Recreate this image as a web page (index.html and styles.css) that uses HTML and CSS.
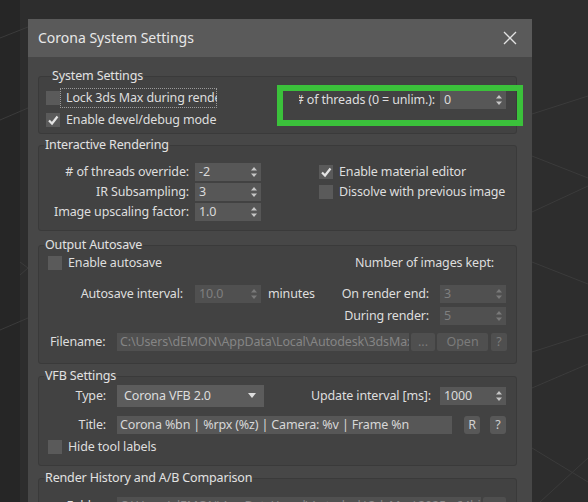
FILE: index.html
```html
<!DOCTYPE html>
<html lang="en">
<head>
    <meta charset="utf-8">
    <title>Corona System Settings</title>
    <link rel="stylesheet" href="styles.css">
</head>
<body>
<div class="viewport">
    <!-- viewport grid behind the dialog -->
    <svg class="grid" width="588" height="502" viewBox="0 0 588 502">
        <g stroke="#3b3b3b" stroke-width="1" fill="none">
            <path d="M0 38 L28 27"/>
            <path d="M0 120 L28 108"/>
            <path d="M20 262 L28 268 L20 275"/>
            <path d="M0 330 L28 318"/>
            <path d="M532 114 L588 96"/>
            <path d="M532 156 L588 178"/>
            <path d="M532 212 L588 186"/>
            <path d="M532 262 L588 284"/>
            <path d="M532 352 L588 334"/>
            <path d="M532 388 L588 364"/>
            <path d="M532 448 L588 482"/>
            <path d="M540 502 L588 458"/>
        </g>
    </svg>

    <div class="dialog">
        <div class="titlebar">
            <span class="title">Corona System Settings</span>
            <svg class="close" width="14" height="14" viewBox="0 0 14 14">
                <path d="M1 1 L13 13 M13 1 L1 13" stroke="#e2e2e2" stroke-width="1.3"/>
            </svg>
        </div>

        <div class="dialog-body">
            <fieldset class="group sys">
                <legend>System Settings</legend>
                <label class="check">
                    <span class="box"></span>
                    <span class="text focus">Lock 3ds Max during render</span>
                </label>
                <div class="sys-threads">
                    <span class="clip"><span># of threads (0 = unlim.):</span></span>
                    <div class="spin">0<svg width="6" height="12" viewBox="0 0 6 12"><path d="M0 4.5 L3 1 L6 4.5Z M0 7.5 L3 11 L6 7.5Z"/></svg></div>
                </div>
                <label class="check">
                    <span class="box"><svg width="14" height="14" viewBox="0 0 14 14"><path d="M3 7.5 L6 10.5 L11.5 3.5"/></svg></span>
                    <span class="text">Enable devel/debug mode</span>
                </label>
                <div class="highlight"></div>
            </fieldset>

            <fieldset class="group interactive">
                <legend>Interactive Rendering</legend>
                <div class="ir-grid">
                    <span class="lbl"># of threads override:</span>
                    <div class="spin">-2<svg width="6" height="12" viewBox="0 0 6 12"><path d="M0 4.5 L3 1 L6 4.5Z M0 7.5 L3 11 L6 7.5Z"/></svg></div>
                    <span class="lbl">IR Subsampling:</span>
                    <div class="spin">3<svg width="6" height="12" viewBox="0 0 6 12"><path d="M0 4.5 L3 1 L6 4.5Z M0 7.5 L3 11 L6 7.5Z"/></svg></div>
                    <span class="lbl">Image upscaling factor:</span>
                    <div class="spin">1.0<svg width="6" height="12" viewBox="0 0 6 12"><path d="M0 4.5 L3 1 L6 4.5Z M0 7.5 L3 11 L6 7.5Z"/></svg></div>
                </div>
                <div class="ir-checks">
                    <label class="check">
                        <span class="box"><svg width="14" height="14" viewBox="0 0 14 14"><path d="M3 7.5 L6 10.5 L11.5 3.5"/></svg></span>
                        <span class="text">Enable material editor</span>
                    </label>
                    <label class="check">
                        <span class="box"></span>
                        <span class="text">Dissolve with previous image</span>
                    </label>
                </div>
            </fieldset>

            <fieldset class="group autosave">
                <legend>Output Autosave</legend>
                <div class="as-top">
                    <label class="check">
                        <span class="box"></span>
                        <span class="text">Enable autosave</span>
                    </label>
                    <span>Number of images kept:</span>
                </div>
                <div class="as-grid">
                    <span class="lbl">Autosave interval:</span>
                    <div class="spin off">10.0<svg width="6" height="12" viewBox="0 0 6 12"><path d="M0 4.5 L3 1 L6 4.5Z M0 7.5 L3 11 L6 7.5Z"/></svg></div>
                    <span class="unit">minutes</span>
                    <span class="lbl">On render end:</span>
                    <div class="spin off">3<svg width="6" height="12" viewBox="0 0 6 12"><path d="M0 4.5 L3 1 L6 4.5Z M0 7.5 L3 11 L6 7.5Z"/></svg></div>

                    <span class="lbl wide">During render:</span>
                    <div class="spin off">5<svg width="6" height="12" viewBox="0 0 6 12"><path d="M0 4.5 L3 1 L6 4.5Z M0 7.5 L3 11 L6 7.5Z"/></svg></div>
                </div>
                <div class="file-row">
                    <span class="file-lbl">Filename:</span>
                    <div class="input off file-input">C:\Users\dEMON\AppData\Local\Autodesk\3dsMax</div>
                    <button class="btn off dots">...</button>
                    <button class="btn off open">Open</button>
                    <button class="btn off help">?</button>
                </div>
            </fieldset>

            <fieldset class="group vfb">
                <legend>VFB Settings</legend>
                <div class="vfb-row">
                    <span class="row-lbl">Type:</span>
                    <div class="combo">Corona VFB 2.0<svg width="8" height="6" viewBox="0 0 8 6"><path d="M0 0 L8 0 L4 5Z"/></svg></div>
                    <span class="push">Update interval [ms]:</span>
                    <div class="spin">1000<svg width="6" height="12" viewBox="0 0 6 12"><path d="M0 4.5 L3 1 L6 4.5Z M0 7.5 L3 11 L6 7.5Z"/></svg></div>
                </div>
                <div class="vfb-row title-row">
                    <span class="row-lbl">Title:</span>
                    <div class="input title-input">Corona %bn | %rpx (%z) | Camera: %v | Frame %n</div>
                    <button class="btn small r">R</button>
                    <button class="btn small q">?</button>
                </div>
                <label class="check hide-labels">
                    <span class="box"></span>
                    <span class="text">Hide tool labels</span>
                </label>
            </fieldset>

            <fieldset class="group history">
                <legend>Render History and A/B Comparison</legend>
                <div class="vfb-row">
                    <span class="row-lbl">Folder:</span>
                    <div class="input off folder-input">C:\Users\dEMON\AppData\Local\Autodesk\3dsMax\2025 - 64bi</div>
                    <button class="btn off folder-btn">...</button>
                </div>
            </fieldset>
        </div>
    </div>
</div>
</body>
</html>
```

FILE: styles.css
```css
* {
    box-sizing: border-box;
}

html, body {
    margin: 0;
    height: 100%;
    overflow: hidden;
}

body {
    background: #2c2c2c;
    font-family: "Noto Sans", "Open Sans", sans-serif;
    font-size: 12.5px;
    letter-spacing: -0.15px;
    line-height: 18px;
    color: #dedede;
}

.viewport {
    position: relative;
    width: 588px;
    height: 502px;
    background: linear-gradient(to right, #262626 0 20px, #2d2d2d 20px);
}

.grid {
    position: absolute;
    left: 0;
    top: 0;
}

/* window */
.dialog {
    position: absolute;
    left: 28px;
    top: 19px;
    width: 504px;
    height: 483px;
    background: #474747;
    overflow: hidden;
}

.titlebar {
    height: 38px;
    background: #5a5a5a;
    display: flex;
    align-items: center;
    justify-content: space-between;
    padding: 0 15px 0 10px;
}

.title {
    font-size: 14px;
    letter-spacing: 0;
    color: #e8e8e8;
}

.dialog-body {
    padding: 10px 15px 0 10px;
    display: flex;
    flex-direction: column;
    gap: 2px;
}

/* group boxes */
.group {
    margin: 0;
    padding: 0;
    min-width: 0;
    border: 1px solid #3a3a3a;
    border-radius: 3px;
    background: #424242;
    position: relative;
}

.group legend {
    margin-left: 5px;
    padding: 0 1px;
    line-height: 18px;
    color: #e2e2e2;
}

/* controls */
.check {
    display: flex;
    align-items: center;
    height: 18px;
}

.box {
    width: 14px;
    height: 14px;
    flex: none;
    background: #5a5a5a;
}

.box svg {
    display: block;
    fill: none;
    stroke: #e4e4e4;
    stroke-width: 2.2;
}

.check .text {
    padding: 0 3px 0 6px;
    white-space: nowrap;
}

.spin {
    width: 66px;
    height: 18px;
    flex: none;
    display: flex;
    align-items: center;
    justify-content: space-between;
    padding: 0 4px 0 4px;
    background: #575757;
    color: #dadada;
}

.spin svg {
    fill: #c6c6c6;
}

.spin.off {
    background: #505050;
    color: #7f7f7f;
}

.spin.off svg {
    fill: #7a7a7a;
}

.input {
    height: 18px;
    padding: 0 3px;
    background: #575757;
    color: #d8d8d8;
    white-space: nowrap;
    overflow: hidden;
}

.input.off {
    background: #505050;
    color: #858585;
}

.btn {
    height: 18px;
    padding: 0;
    border: 0;
    border-radius: 2px;
    font: inherit;
    background: #585858;
    color: #d0d0d0;
}

.btn.off {
    background: #4f4f4f;
    color: #7b7b7b;
}

.lbl {
    text-align: right;
    white-space: nowrap;
}

/* System Settings */
.sys {
    display: grid;
    grid-template-columns: 232px 1fr;
    grid-template-rows: 20px 20px;
    row-gap: 2px;
    padding: 3px 10px 3px 7px;
}

.sys .check {
    height: 20px;
}

.text.focus {
    width: 157px;
    height: 20px;
    line-height: 20px;
    overflow: hidden;
    outline: 1px dotted #9a9a9a;
    outline-offset: -1px;
}

.sys-threads {
    display: flex;
    justify-content: flex-end;
    align-items: center;
    margin-top: 3px;
    height: 18px;
}

/* label is wider than its slot, so the left edge gets cut */
.clip {
    width: 136px;
    display: flex;
    justify-content: flex-end;
    overflow: hidden;
    white-space: nowrap;
    margin-right: 5px;
}

.clip span {
    flex: none;
}

.highlight {
    position: absolute;
    left: 238px;
    top: 0;
    width: 246px;
    height: 41px;
    border: 6px solid #3bc13b;
}

/* Interactive Rendering */
.interactive {
    display: flex;
    padding: 9px 0 9px 0;
}

.ir-grid {
    display: grid;
    grid-template-columns: 150px 66px;
    column-gap: 6px;
    row-gap: 2px;
    align-items: center;
}

.ir-checks {
    margin-left: 58px;
    display: flex;
    flex-direction: column;
    gap: 2px;
}

/* Output Autosave */
.autosave {
    margin-top: 3px;
}

.as-top {
    display: flex;
    justify-content: space-between;
    align-items: center;
    height: 18px;
    padding: 0 22px 0 9px;
}

.as-grid {
    margin-top: 13px;
    display: grid;
    grid-template-columns: 156px 66px auto 1fr 66px;
    row-gap: 4px;
    align-items: center;
    padding-right: 10px;
}

.as-grid .lbl {
    padding-right: 11px;
}

.as-grid .lbl:first-child {
    padding-right: 12px;
}

.as-grid .wide {
    grid-column: 1 / 5;
}

.unit {
    padding-left: 7px;
}

.file-row {
    margin-top: 8px;
    display: flex;
    align-items: center;
    padding: 0 0 12px 11px;
}

.file-lbl {
    width: 67px;
}

.file-input {
    width: 292px;
}

.dots {
    width: 24px;
    margin-left: 2px;
}

.open {
    width: 51px;
    margin-left: 2px;
}

.help {
    width: 16px;
    margin-left: 3px;
}

/* VFB Settings */
.vfb {
    margin-top: 1px;
    padding-bottom: 9px;
}

.vfb-row {
    display: flex;
    align-items: center;
    padding-right: 10px;
}

.row-lbl {
    width: 78px;
    flex: none;
    text-align: right;
    padding-right: 11px;
}

.combo {
    width: 147px;
    height: 22px;
    display: flex;
    align-items: center;
    justify-content: space-between;
    padding: 0 8px 0 7px;
    background: #5c5c5c;
    color: #dcdcdc;
}

.combo svg {
    fill: #dedede;
}

.push {
    margin-left: auto;
    margin-right: 9px;
}

.title-row {
    margin-top: 9px;
}

.title-input {
    width: 338px;
}

.small {
    width: 16px;
    border-radius: 3px;
}

.r {
    margin-left: 12px;
}

.q {
    margin-left: 10px;
}

.hide-labels {
    margin-top: 4px;
    padding-left: 9px;
}

/* Render History */
.history {
    margin-top: 1px;
    padding-top: 10px;
    height: 60px;
}

.folder-input {
    width: 364px;
}

.folder-btn {
    width: 23px;
    margin-left: 2px;
}
```
